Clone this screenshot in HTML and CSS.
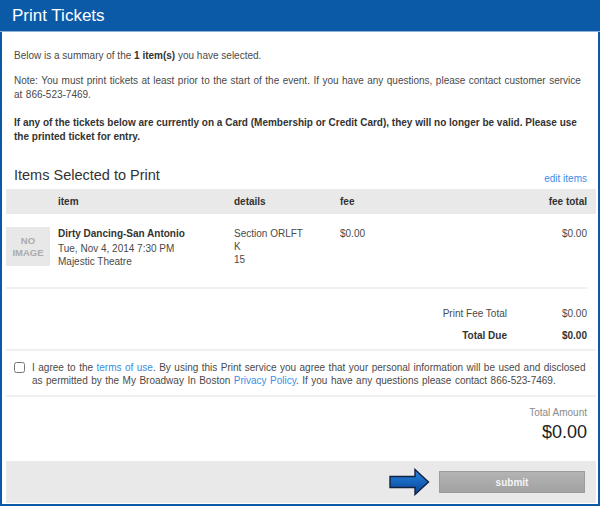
FILE: index.html
```html
<!DOCTYPE html>
<html lang="en">
<head>
  <meta charset="UTF-8">
  <title>Print Tickets</title>
  <link rel="stylesheet" href="styles.css">
</head>
<body>
  <div class="panel">
    <div class="panel-head">
      <h1>Print Tickets</h1>
    </div>
    <div class="panel-body">
      <div class="intro">
        <p class="summary">Below is a summary of the <strong>1 item(s)</strong> you have selected.</p>
        <p class="note">Note: You must print tickets at least prior to the start of the event. If you have any questions, please contact customer service at 866-523-7469.</p>
        <p class="warn">If any of the tickets below are currently on a Card (Membership or Credit Card), they will no longer be valid. Please use the printed ticket for entry.</p>
      </div>

      <div class="items-head">
        <h2>Items Selected to Print</h2>
        <a href="#" class="link">edit items</a>
      </div>

      <div class="items">
        <div class="items-row items-cols">
          <span></span>
          <span>item</span>
          <span>details</span>
          <span>fee</span>
          <span class="right">fee total</span>
        </div>
        <div class="item">
          <div class="no-image">NO<br>IMAGE</div>
          <div class="item-info">
            <strong>Dirty Dancing-San Antonio</strong>
            <span>Tue, Nov 4, 2014 7:30 PM</span>
            <span>Majestic Theatre</span>
          </div>
          <div class="item-details">
            <span>Section ORLFT</span>
            <span>K</span>
            <span>15</span>
          </div>
          <div>$0.00</div>
          <div class="right">$0.00</div>
        </div>
      </div>

      <div class="totals">
        <span>Print Fee Total</span>
        <span>$0.00</span>
        <strong>Total Due</strong>
        <strong>$0.00</strong>
      </div>

      <label class="agree">
        <input type="checkbox">
        <span>I agree to the <a href="#" class="link">terms of use</a>. By using this Print service you agree that your personal information will be used and disclosed as permitted by the My Broadway In Boston <a href="#" class="link">Privacy Policy</a>. If you have any questions please contact 866-523-7469.</span>
      </label>

      <div class="amount">
        <span class="amount-label">Total Amount</span>
        <span class="amount-value">$0.00</span>
      </div>

      <div class="actions">
        <svg class="arrow" width="41" height="28" viewBox="0 0 41 28">
          <defs>
            <linearGradient id="arrowFill" x1="0" y1="0" x2="0" y2="1">
              <stop offset="0" stop-color="#2f86dc"/>
              <stop offset="0.5" stop-color="#1665bd"/>
              <stop offset="1" stop-color="#0b4592"/>
            </linearGradient>
          </defs>
          <path d="M1 8.5 H26 V1.5 L39.5 14 L26 26.5 V19.5 H1 Z" fill="url(#arrowFill)" stroke="#10223f" stroke-width="1.4" stroke-linejoin="miter"/>
        </svg>
        <button type="button" class="submit">submit</button>
      </div>
    </div>
  </div>
</body>
</html>
```

FILE: styles.css
```css
body {
  margin: 0;
  font-family: "Liberation Sans", Arial, sans-serif;
  font-size: 10px;
  color: #4a4a4a;
  background: #fff;
}

.panel {
  width: 596px;
  border: 2px solid #0c5aa6;
  border-top: none;
}

.panel-head {
  background: #0b5aa7;
  height: 31px;
  border-bottom: 1px solid #8cb3dc;
  margin: 0 -2px;
}

.panel-head h1 {
  margin: 0;
  padding: 6px 0 0 12px;
  font-size: 17px;
  font-weight: normal;
  color: #fff;
  line-height: 20px;
}

.panel-body {
  padding: 0 2px 1px 4px;
}

.intro {
  padding: 17px 12px 0 8px;
}

.intro p {
  margin: 0;
  line-height: 14px;
}

.summary {
  padding-bottom: 11px;
}

.note {
  padding-bottom: 14px;
  word-spacing: 0.7px;
}

.intro strong,
.warn {
  font-weight: bold;
  color: #333;
}

.items-head {
  display: flex;
  justify-content: space-between;
  align-items: flex-end;
  padding: 0 9px 0 8px;
  margin-top: 22px;
}

.items-head h2 {
  margin: 0;
  font-size: 14.5px;
  font-weight: normal;
  color: #333;
  line-height: 18px;
}

.link {
  color: #3b8ee3;
  text-decoration: none;
}

.items-row,
.item {
  display: grid;
  grid-template-columns: 52px 176px 106px 1fr 100px;
}

.items-cols {
  background: #e9e9e9;
  height: 25px;
  align-items: center;
  font-weight: bold;
  color: #333;
  margin-top: 5px;
  padding-right: 9px;
}

.right {
  text-align: right;
}

.item {
  padding: 13px 0 19px 0;
  border-bottom: 2px solid #f0f0f0;
  margin-right: 9px;
  line-height: 13px;
}

.no-image {
  width: 44px;
  height: 39px;
  background: #e8e8e8;
  color: #ababab;
  font-weight: bold;
  font-size: 9.5px;
  line-height: 12px;
  text-align: center;
  display: flex;
  align-items: center;
  justify-content: center;
}

.item-info,
.item-details {
  display: flex;
  flex-direction: column;
}

.item-info strong {
  color: #333;
  margin-bottom: 2px;
}

.totals {
  display: grid;
  grid-template-columns: 1fr 80px;
  row-gap: 9px;
  text-align: right;
  line-height: 13px;
  padding: 18px 9px 7px 0;
  border-bottom: 2px solid #f0f0f0;
}

.totals strong {
  color: #333;
}

.agree {
  display: flex;
  gap: 7px;
  padding: 10px 9px 8px 8px;
  line-height: 13px;
  word-spacing: 0.7px;
  border-bottom: 2px solid #f0f0f0;
}

.agree input {
  margin: 1px 0 0;
  width: 11px;
  height: 11px;
  flex: none;
}

.amount {
  display: flex;
  flex-direction: column;
  align-items: flex-end;
  padding: 9px 9px 0 0;
  height: 55px;
}

.amount-label {
  color: #8a8a8a;
  line-height: 13px;
}

.amount-value {
  font-size: 18px;
  color: #222;
  margin-top: 3px;
}

.actions {
  background: #e9e9e9;
  height: 42px;
  display: flex;
  align-items: center;
  justify-content: flex-end;
  gap: 9px;
  padding-right: 11px;
}

.arrow {
  display: block;
}

.submit {
  width: 146px;
  height: 22px;
  border: 1px solid #9c9c9c;
  background: linear-gradient(#b3b3b3, #a2a2a2);
  color: #f4f4f4;
  font-family: "Liberation Sans", Arial, sans-serif;
  font-weight: bold;
  font-size: 10px;
  padding: 0;
  cursor: pointer;
}
```
